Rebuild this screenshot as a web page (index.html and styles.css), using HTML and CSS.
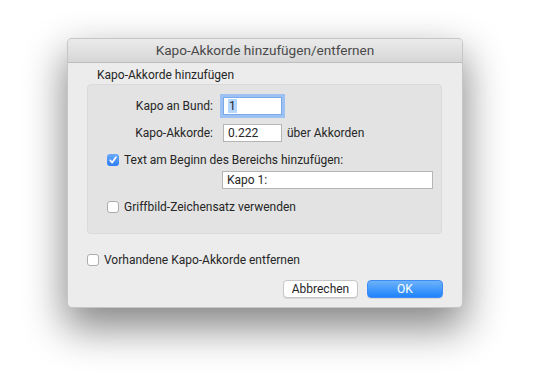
FILE: index.html
```html
<!DOCTYPE html>
<html lang="de">
<head>
    <meta charset="UTF-8">
    <title>Kapo-Akkorde hinzufügen/entfernen</title>
    <link rel="stylesheet" href="styles.css">
</head>
<body>

<div class="dialog">
    <div class="titlebar">Kapo-Akkorde hinzufügen/entfernen</div>
    <div class="content">
        <div class="group-title">Kapo-Akkorde hinzufügen</div>
        <div class="group-box">
            <div class="field-row">
                <label class="field-label">Kapo an Bund:</label>
                <div class="text-input small focused"><span class="selected">1</span></div>
            </div>
            <div class="field-row">
                <label class="field-label">Kapo-Akkorde:</label>
                <div class="text-input small">0.222</div>
                <span class="suffix">über Akkorden</span>
            </div>
            <div class="check-row first">
                <span class="checkbox checked">
                    <svg width="12" height="12" viewBox="0 0 12 12"><path d="M3.2 6.3 L5.2 8.6 L8.9 3.2" fill="none" stroke="#fff" stroke-width="1.7" stroke-linecap="round" stroke-linejoin="round"/></svg>
                </span>
                <span>Text am Beginn des Bereichs hinzufügen:</span>
            </div>
            <div class="text-input wide">Kapo 1:</div>
            <div class="check-row second">
                <span class="checkbox"></span>
                <span>Griffbild-Zeichensatz verwenden</span>
            </div>
        </div>
        <div class="check-row outer">
            <span class="checkbox"></span>
            <span>Vorhandene Kapo-Akkorde entfernen</span>
        </div>
        <div class="buttons">
            <button class="btn">Abbrechen</button>
            <button class="btn primary">OK</button>
        </div>
    </div>
</div>

</body>
</html>
```

FILE: styles.css
```css
html, body {
    margin: 0;
    background: #fff;
    font-family: Roboto, "Liberation Sans", sans-serif;
    font-size: 12px;
    color: #262626;
}
body {
    padding: 38px 0 0 67px;
    height: 380px;
    box-sizing: border-box;
}
.dialog {
    width: 396px;
    height: 270px;
    background: #ececec;
    border-radius: 5px;
    border: 1px solid rgba(0, 0, 0, 0.16);
    box-sizing: border-box;
    box-shadow: 0 18px 40px 2px rgba(0, 0, 0, 0.48);
}
.titlebar {
    height: 23px;
    line-height: 23px;
    text-align: center;
    font-size: 13.6px;
    color: #4a4a4a;
    background: linear-gradient(#ebebeb, #d6d6d6);
    border-bottom: 1px solid #bdbdbd;
    border-radius: 4px 4px 0 0;
}
.content {
    padding: 4px 19px 0 19px;
}
.group-title {
    height: 17px;
    line-height: 17px;
    padding-left: 10px;
}
.group-box {
    height: 136px;
    margin-right: 1px;
    background: #e3e3e3;
    border: 1px solid #dadada;
    border-radius: 4px;
    padding-top: 12px;
}
.field-row {
    display: flex;
    align-items: center;
    height: 18px;
    margin-bottom: 9px;
}
.field-label {
    width: 125px;
    text-align: right;
    margin-right: 10px;
}
.text-input {
    height: 18px;
    line-height: 17px;
    box-sizing: border-box;
    background: #fff;
    border: 1px solid #b5b5b5;
    padding-left: 4px;
}
.text-input.small {
    width: 59px;
}
.text-input.focused {
    border-color: #7aa9ea;
    box-shadow: 0 0 0 3px #9dc1f2;
}
.selected {
    background: #b3d7ff;
    padding: 0 1px;
}
.suffix {
    margin-left: 5px;
}
.check-row {
    display: flex;
    align-items: center;
    height: 18px;
    padding-left: 19px;
}
.checkbox {
    width: 12px;
    height: 12px;
    box-sizing: border-box;
    border: 1px solid #adadad;
    border-radius: 3px;
    background: #fff;
    margin-right: 5px;
    display: flex;
}
.checkbox.checked {
    border: none;
    background: linear-gradient(#6aabf9, #2f7cf6);
}
.check-row.first {
    margin-top: 2px;
}
.text-input.wide {
    width: 211px;
    margin: 2px 0 0 134px;
}
.check-row.second {
    margin-top: 9px;
}
.check-row.outer {
    padding-left: 0;
    margin-top: 17px;
}
.buttons {
    display: flex;
    justify-content: flex-end;
    gap: 9px;
    margin-top: 11px;
}
.btn {
    height: 18px;
    font-family: inherit;
    font-size: 12px;
    color: #262626;
    background: #fff;
    border: 1px solid #c6c6c6;
    border-radius: 4px;
    box-shadow: 0 1px 0 rgba(0, 0, 0, 0.08);
    width: 75px;
    padding: 0;
}
.btn.primary {
    width: 76px;
    color: #fff;
    border-color: #3f8cf7;
    background: linear-gradient(#6cb2fa, #1f83fb);
}
```
